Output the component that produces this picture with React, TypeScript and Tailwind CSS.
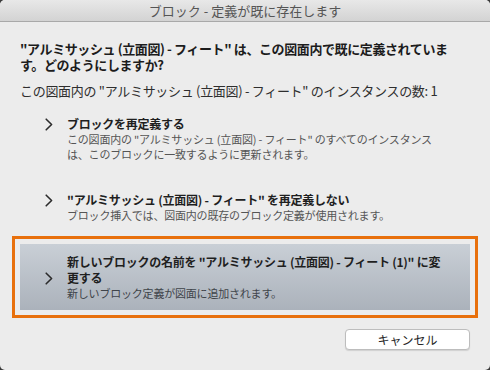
import React from "react";

type Option = {
    title: React.ReactNode;
    desc: React.ReactNode;
    chevron: string;
    selected?: boolean;
};

const options: Option[] = [
    {
        title: "ブロックを再定義する",
        desc: (
            <>
                この図面内の "アルミサッシュ (立面図) - フィート" のすべてのインスタンス
                <br/>
                は、このブロックに一致するように更新されます。
            </>
        ),
        chevron: "mt-0",
    },
    {
        title: "\"アルミサッシュ (立面図) - フィート\" を再定義しない",
        desc: "ブロック挿入では、図面内の既存のブロック定義が使用されます。",
        chevron: "mt-0",
    },
    {
        title: (
            <>
                新しいブロックの名前を "アルミサッシュ (立面図) - フィート (1)" に変
                <br/>
                更する
            </>
        ),
        desc: "新しいブロック定義が図面に追加されます。",
        chevron: "mt-[16px]",
        selected: true,
    },
];

function Chevron() {
    return (
        <svg width="8" height="13" viewBox="0 0 8 13" fill="none">
            <path d="M1.2 1.2 L6.6 6.5 L1.2 11.8" stroke="#2b2b2b" strokeWidth="1.6" strokeLinecap="round"
                  strokeLinejoin="round"/>
        </svg>
    );
}

export default function App() {
    return (
        <div className="w-[490px] h-[370px] bg-[#3a3a3a] font-['Noto_Sans_CJK_JP',sans-serif]">
            <div className="w-full h-full bg-[#ececec] rounded-[5px] overflow-hidden flex flex-col">
                <div
                    className="h-[22px] shrink-0 border-b border-[#a9a9a9] bg-linear-to-b from-[#e8e8e8] to-[#d3d3d3] text-center text-[13px] leading-[21px] text-[#555555]">
                    ブロック - 定義が既に存在します
                </div>

                <div className="flex flex-col px-[20px] pt-[19px]">
                    <p className="text-[13px] leading-[16px] font-bold tracking-[-0.4px] text-[#1c1c1c] whitespace-nowrap">
                        "アルミサッシュ (立面図) - フィート" は、この図面内で既に定義されていま
                        <br/>
                        す。どのようにしますか?
                    </p>
                    <p className="mt-[10px] text-[13px] leading-[16px] tracking-[-0.3px] text-[#2e2e2e] whitespace-nowrap">
                        この図面内の "アルミサッシュ (立面図) - フィート" のインスタンスの数: 1
                    </p>

                    <div className="mt-[7px] flex flex-col gap-[10px]">
                        {options.map((o, i) => (
                            <div key={i}
                                 className={o.selected
                                     ? "mt-[1px] flex pl-[25px] pt-[10px] pb-[9px] bg-linear-to-b from-[#c9cfd6] to-[#abb2bb] outline-[3px] outline-solid outline-[#e8700c] outline-offset-[5px]"
                                     : "flex pl-[25px] pt-[10px] pb-[10px]"}>
                                <div className={`w-[22px] shrink-0 h-[16px] flex items-center ${o.chevron}`}>
                                    <Chevron/>
                                </div>
                                <div className="flex flex-col whitespace-nowrap">
                                    <p className="text-[12px] leading-[16px] font-bold tracking-[-0.25px] text-[#1f1f1f]">{o.title}</p>
                                    <p className={`text-[11px] leading-[15px] tracking-[-0.2px] ${o.selected ? "text-[#3f444a]" : "text-[#555555]"}`}>{o.desc}</p>
                                </div>
                            </div>
                        ))}
                    </div>

                    <div className="flex justify-end mt-[19px]">
                        <button
                            className="w-[125px] h-[21px] bg-white border border-[#bdbdbd] rounded-[4px] shadow-[0_1px_1px_rgba(0,0,0,0.12)] text-[12px] leading-[19px] text-[#262626]">
                            キャンセル
                        </button>
                    </div>
                </div>
            </div>
        </div>
    );
}
